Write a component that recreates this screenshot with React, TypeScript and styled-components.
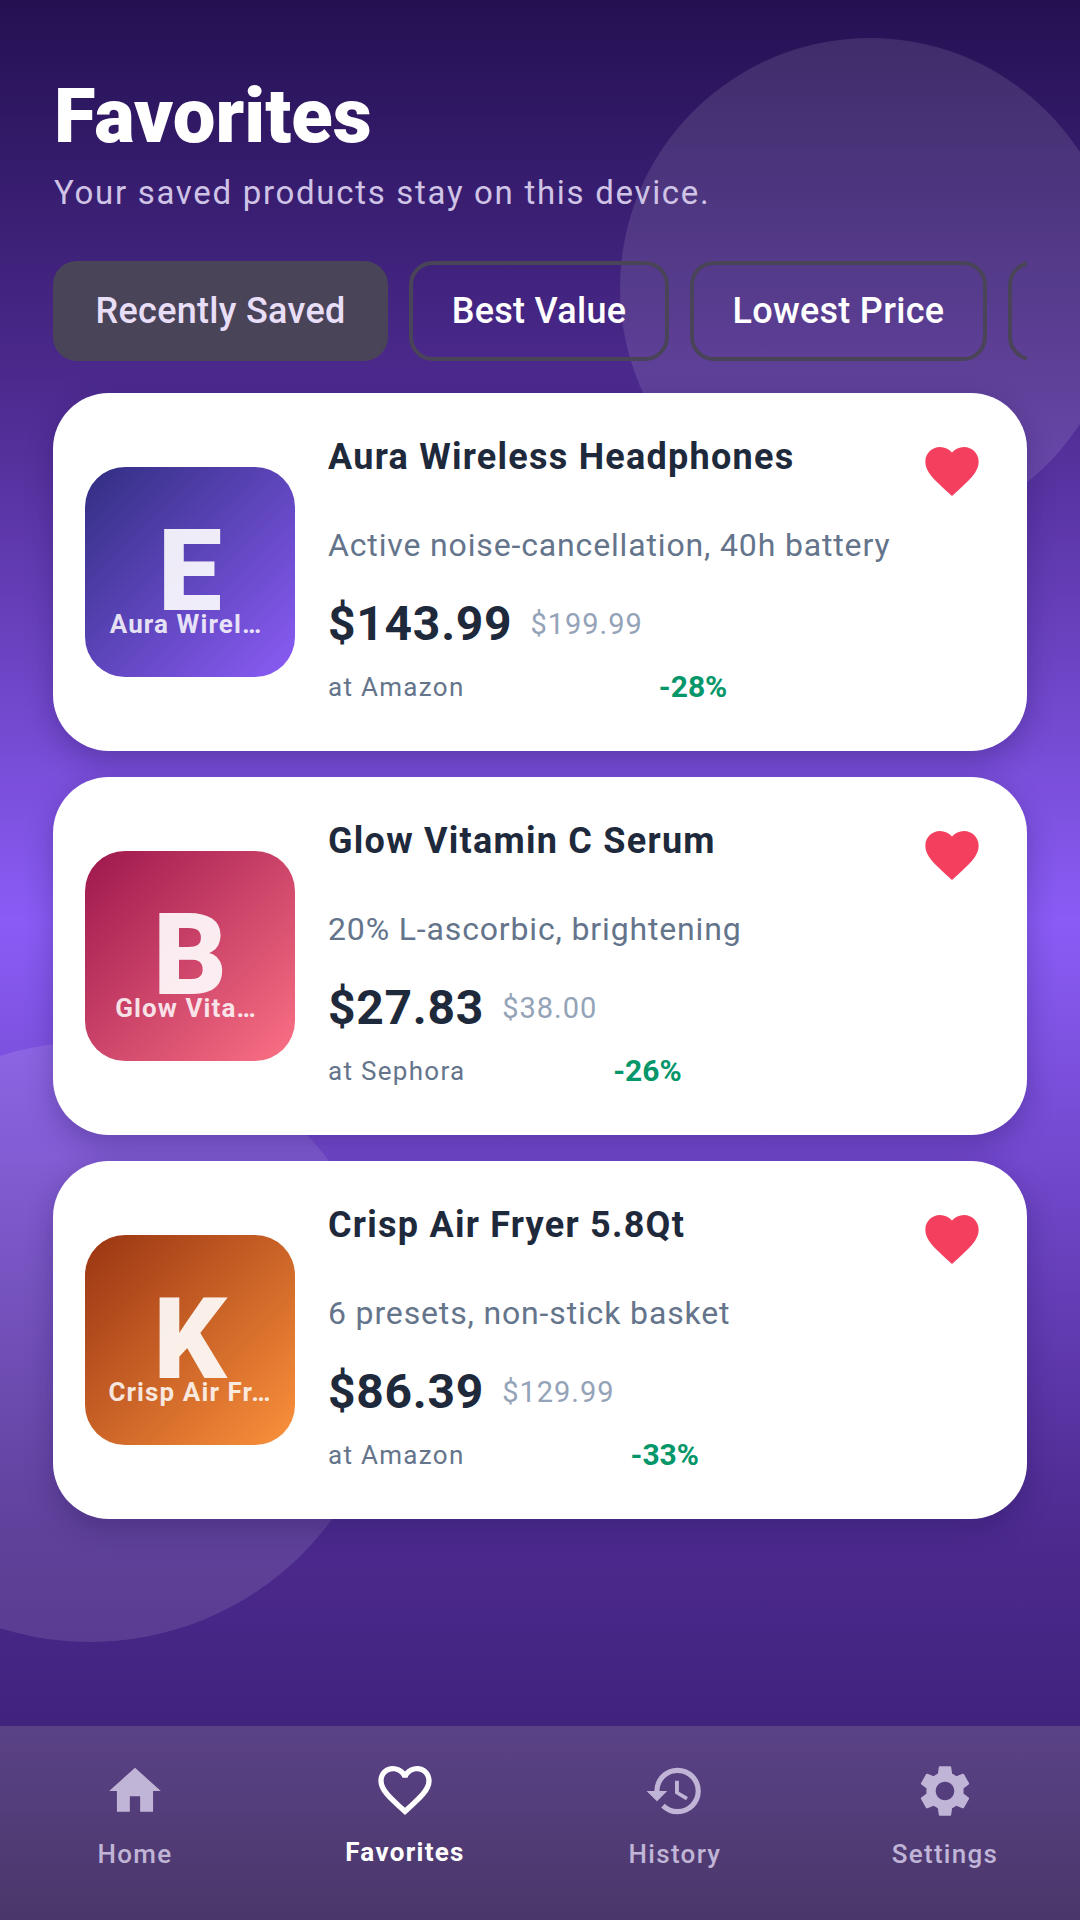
import { createGlobalStyle, styled } from "styled-components";
import { MdFavorite, MdFavoriteBorder, MdHistory, MdHome, MdSettings } from "react-icons/md";

const GlobalStyle = createGlobalStyle`
  html, body {
    margin: 0;
    padding: 0;
    overflow: hidden;
  }
  * {
    box-sizing: border-box;
  }
  body {
    font-family: Roboto, "Noto Sans", sans-serif;
  }
`;

const Screen = styled.div`
  position: relative;
  width: 1080px;
  height: 1920px;
  overflow: hidden;
  display: flex;
  flex-direction: column;
  background: linear-gradient(180deg, #241152 0%, #4c2a8e 20%, #8b5cf6 48%, #4c2a8e 80%, #351c6c 100%);
`;

const Blob = styled.div<{ $left: number; $top: number; $size: number }>`
  position: absolute;
  left: ${(p) => p.$left}px;
  top: ${(p) => p.$top}px;
  width: ${(p) => p.$size}px;
  height: ${(p) => p.$size}px;
  border-radius: 50%;
  background: rgba(255, 255, 255, 0.11);
`;

const Content = styled.main`
  position: relative;
  flex: 1;
  padding: 72px 53px 0;
`;

const Title = styled.h1`
  margin: 0;
  padding-left: 1px;
  font-size: 76px;
  line-height: 88px;
  font-weight: 900;
  color: #ffffff;
`;

const Subtitle = styled.p`
  margin: 11px 0 0;
  padding-left: 1px;
  font-size: 33px;
  line-height: 44px;
  letter-spacing: 1.7px;
  color: #cfc3e6;
`;

const Chips = styled.div`
  display: flex;
  gap: 21px;
  margin-top: 46px;
  overflow: hidden;
`;

const Chip = styled.div<{ $active?: boolean }>`
  flex: none;
  height: 100px;
  padding: 0 38.5px;
  display: flex;
  align-items: center;
  border-radius: 24px;
  border: 4px solid #4a4458;
  background: ${(p) => (p.$active ? "#4a4458" : "transparent")};
  color: ${(p) => (p.$active ? "#e8def8" : "#ffffff")};
  font-size: 36px;
  font-weight: 500;
  letter-spacing: 0.3px;
`;

const Cards = styled.div`
  display: flex;
  flex-direction: column;
  gap: 26px;
  margin-top: 32px;
`;

const Card = styled.article`
  height: 358px;
  padding: 32px;
  display: flex;
  align-items: center;
  gap: 33px;
  background: #ffffff;
  border-radius: 56px;
  box-shadow: 0 10px 28px rgba(30, 15, 80, 0.3);
`;

const Thumb = styled.div<{ $from: string; $to: string }>`
  position: relative;
  flex: none;
  width: 210px;
  height: 210px;
  border-radius: 40px;
  display: flex;
  justify-content: center;
  background: linear-gradient(135deg, ${(p) => p.$from}, ${(p) => p.$to});
`;

const ThumbLetter = styled.span`
  margin-top: 36px;
  font-size: 114px;
  line-height: 136px;
  font-weight: 900;
  color: rgba(255, 255, 255, 0.9);
`;

const ThumbLabel = styled.span<{ $inset: number }>`
  position: absolute;
  left: 0;
  right: 0;
  top: 141px;
  padding-right: ${(p) => p.$inset}px;
  font-size: 26px;
  line-height: 32px;
  font-weight: 700;
  letter-spacing: 1.1px;
  text-align: center;
  white-space: nowrap;
  color: rgba(255, 255, 255, 0.85);
`;

const Body = styled.div`
  flex: 1;
  min-width: 0;
  align-self: stretch;
  display: flex;
  flex-direction: column;
`;

const TitleRow = styled.div`
  display: flex;
  align-items: flex-start;
  justify-content: space-between;
  height: 92px;
`;

const CardTitle = styled.h2`
  margin: 10px 0 0;
  font-size: 36px;
  line-height: 44px;
  font-weight: 700;
  letter-spacing: 1.25px;
  color: #1e293b;
`;

const HeartButton = styled.div`
  padding: 14px 11px;
  color: #f43f5e;
  display: flex;
`;

const Desc = styled.p`
  margin: 8px 0 0;
  font-size: 32px;
  line-height: 40px;
  letter-spacing: 0.85px;
  color: #64748b;
`;

const PriceBlock = styled.div`
  display: flex;
  align-items: flex-end;
  gap: 16px;
  margin-top: 29px;
`;

const PriceColumn = styled.div`
  display: flex;
  flex-direction: column;
`;

const PriceRow = styled.div`
  display: flex;
  align-items: center;
  gap: 18px;
`;

const Price = styled.span`
  font-size: 48px;
  line-height: 60px;
  font-weight: 700;
  letter-spacing: 0.75px;
  color: #1e293b;
`;

const OldPrice = styled.span`
  font-size: 29px;
  letter-spacing: 1px;
  color: #94a3b8;
`;

const Store = styled.span`
  margin-top: 17px;
  font-size: 26px;
  line-height: 32px;
  letter-spacing: 1.3px;
  color: #64748b;
`;

const Discount = styled.span`
  font-size: 30px;
  line-height: 32px;
  font-weight: 700;
  color: #059669;
`;

const Nav = styled.nav`
  position: relative;
  height: 194px;
  display: grid;
  grid-template-columns: repeat(4, 1fr);
  background: linear-gradient(180deg, #5a4287, #4a3769);
`;

const NavItem = styled.div<{ $active?: boolean }>`
  display: flex;
  flex-direction: column;
  align-items: center;
  padding-top: ${(p) => (p.$active ? 32 : 34)}px;
  color: ${(p) => (p.$active ? "#ffffff" : "#c0b5d6")};
`;

const NavLabel = styled.span<{ $active?: boolean }>`
  margin-top: ${(p) => (p.$active ? 14 : 16)}px;
  font-size: 26px;
  line-height: 32px;
  letter-spacing: 1.3px;
  font-weight: ${(p) => (p.$active ? 700 : 500)};
`;

type Product = {
  letter: string;
  name: string;
  shortName: string;
  labelInset: number;
  desc: string;
  price: string;
  oldPrice: string;
  store: string;
  discount: string;
  from: string;
  to: string;
};

const products: Product[] = [
  {
    letter: "E",
    name: "Aura Wireless Headphones",
    shortName: "Aura Wirel…",
    labelInset: 8,
    desc: "Active noise-cancellation, 40h battery",
    price: "$143.99",
    oldPrice: "$199.99",
    store: "at Amazon",
    discount: "-28%",
    from: "#312e81",
    to: "#8b5cf6",
  },
  {
    letter: "B",
    name: "Glow Vitamin C Serum",
    shortName: "Glow Vita…",
    labelInset: 8,
    desc: "20% L-ascorbic, brightening",
    price: "$27.83",
    oldPrice: "$38.00",
    store: "at Sephora",
    discount: "-26%",
    from: "#9d174d",
    to: "#fb7185",
  },
  {
    letter: "K",
    name: "Crisp Air Fryer 5.8Qt",
    shortName: "Crisp Air Fr…",
    labelInset: 0,
    desc: "6 presets, non-stick basket",
    price: "$86.39",
    oldPrice: "$129.99",
    store: "at Amazon",
    discount: "-33%",
    from: "#9a3412",
    to: "#fb923c",
  },
];

const tabs = [
  { label: "Home", icon: MdHome },
  { label: "Favorites", icon: MdFavoriteBorder, active: true },
  { label: "History", icon: MdHistory },
  { label: "Settings", icon: MdSettings },
];

export default function App() {
  return (
    <Screen>
      <GlobalStyle />
      <Blob $left={620} $top={38} $size={500} />
      <Blob $left={-210} $top={1042} $size={600} />
      <Content>
        <Title>Favorites</Title>
        <Subtitle>Your saved products stay on this device.</Subtitle>
        <Chips>
          <Chip $active>Recently Saved</Chip>
          <Chip>Best Value</Chip>
          <Chip>Lowest Price</Chip>
          <Chip>Top Rated</Chip>
        </Chips>
        <Cards>
          {products.map((p) => (
            <Card key={p.name}>
              <Thumb $from={p.from} $to={p.to}>
                <ThumbLetter>{p.letter}</ThumbLetter>
                <ThumbLabel $inset={p.labelInset}>{p.shortName}</ThumbLabel>
              </Thumb>
              <Body>
                <TitleRow>
                  <CardTitle>{p.name}</CardTitle>
                  <HeartButton>
                    <MdFavorite size={64} />
                  </HeartButton>
                </TitleRow>
                <Desc>{p.desc}</Desc>
                <PriceBlock>
                  <PriceColumn>
                    <PriceRow>
                      <Price>{p.price}</Price>
                      <OldPrice>{p.oldPrice}</OldPrice>
                    </PriceRow>
                    <Store>{p.store}</Store>
                  </PriceColumn>
                  <Discount>{p.discount}</Discount>
                </PriceBlock>
              </Body>
            </Card>
          ))}
        </Cards>
      </Content>
      <Nav>
        {tabs.map((t) => (
          <NavItem key={t.label} $active={t.active}>
            <t.icon size={t.active ? 64 : 62} />
            <NavLabel $active={t.active}>{t.label}</NavLabel>
          </NavItem>
        ))}
      </Nav>
    </Screen>
  );
}
